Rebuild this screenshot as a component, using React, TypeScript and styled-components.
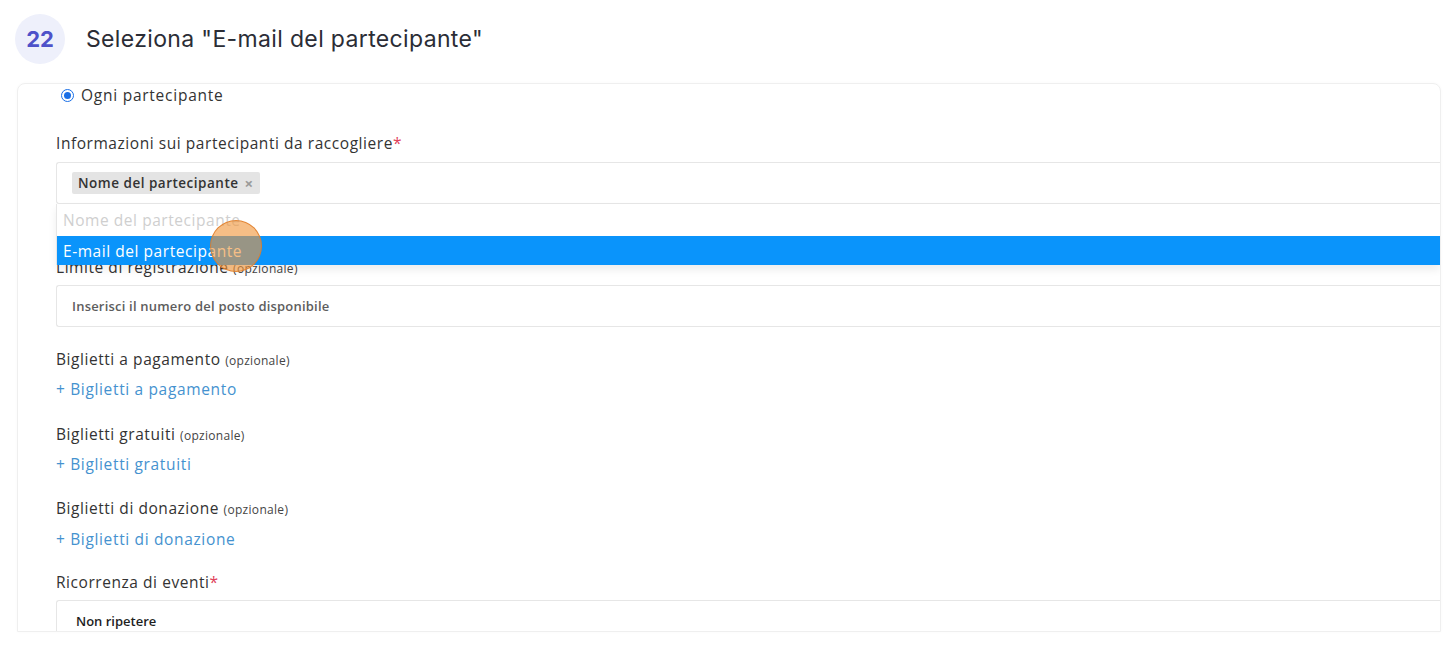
import React from "react";
import styled, { createGlobalStyle } from "styled-components";

const Global = createGlobalStyle`
  html, body { margin: 0; padding: 0; background: #ffffff; }
  body { width: 1454px; height: 646px; overflow: hidden; }
  * { box-sizing: border-box; }
`;

const Page = styled.div`
  width: 1454px;
  height: 646px;
  overflow: hidden;
  background: #fff;
`;

const Header = styled.header`
  display: flex;
  align-items: center;
  gap: 21px;
  padding: 14px 0 0 15px;
  height: 64px;
`;

const StepBadge = styled.div`
  width: 50px;
  height: 50px;
  border-radius: 50%;
  background: #eef0fb;
  color: #4e52c9;
  font-family: Inter, "Liberation Sans", sans-serif;
  font-weight: 700;
  font-size: 22px;
  display: flex;
  align-items: center;
  justify-content: center;
`;

const Title = styled.h1`
  margin: 0;
  font-family: Inter, "Liberation Sans", sans-serif;
  font-weight: 400;
  font-size: 23px;
  color: #2b2d36;
  letter-spacing: 0.35px;
`;

const Frame = styled.section`
  position: relative;
  margin: 19px 0 0 17px;
  width: 1424px;
  height: 549px;
  border: 1px solid #efefef;
  border-radius: 8px 8px 0 0;
  box-shadow: 0 0 3px rgba(0, 0, 0, 0.03);
  overflow: hidden;
  padding: 0 0 0 38px;
  font-family: "Open Sans", "Liberation Sans", sans-serif;
  color: #333;
  letter-spacing: 0.55px;
`;

const RadioRow = styled.label`
  display: flex;
  align-items: center;
  gap: 7px;
  height: 20px;
  margin: 1px 0 0 5px;
  font-size: 15.5px;
  letter-spacing: 0.75px;
  color: #333;
`;

const RadioDot = styled.span`
  width: 13px;
  height: 13px;
  border-radius: 50%;
  border: 1.5px solid #1a6fe6;
  display: flex;
  align-items: center;
  justify-content: center;
  &::after {
    content: "";
    width: 7px;
    height: 7px;
    border-radius: 50%;
    background: #1a6fe6;
  }
`;

const Group = styled.div<{ $mb?: number }>`
  position: relative;
  margin-bottom: ${(p) => p.$mb ?? 22}px;
`;

const Label = styled.div<{ $mt?: number; $gap?: number }>`
  height: 20px;
  line-height: 20px;
  font-size: 15.5px;
  color: #333;
  margin-top: ${(p) => p.$mt ?? 0}px;
  margin-bottom: ${(p) => p.$gap ?? 9}px;
  white-space: nowrap;
`;

const Optional = styled.span`
  font-size: 12px;
  color: #444;
  letter-spacing: 0.3px;
`;

const Req = styled.span`
  color: #e0405a;
`;

const Box = styled.div<{ $pl?: number }>`
  height: 42px;
  border: 1px solid #e6e6e6;
  border-right: none;
  border-radius: 3px 0 0 3px;
  display: flex;
  align-items: center;
  padding-left: ${(p) => p.$pl ?? 15}px;
  background: #fff;
`;

const Tag = styled.span`
  display: inline-flex;
  align-items: center;
  gap: 6px;
  height: 22px;
  padding: 0 6px;
  background: #e4e4e4;
  border-radius: 2px;
  font-size: 13.5px;
  font-weight: 600;
  color: #333;
  letter-spacing: 0.5px;
`;

const TagClose = styled.span`
  color: #9a9a9a;
  font-size: 15px;
  font-weight: 700;
`;

const BoxText = styled.span<{ $strong?: boolean }>`
  font-size: 13px;
  font-weight: 600;
  letter-spacing: ${(p) => (p.$strong ? 0 : 0.2)}px;
  color: ${(p) => (p.$strong ? "#1e1e1e" : "#5d5d5d")};
`;

const Dropdown = styled.ul`
  position: absolute;
  left: 0;
  right: 0;
  top: 71px;
  margin: 0;
  padding: 0;
  list-style: none;
  background: #fff;
  border-left: 1px solid #e6e6e6;
  box-shadow: 0 5px 8px rgba(0, 0, 0, 0.07);
  z-index: 2;
`;

const Option = styled.li<{ $active?: boolean; $disabled?: boolean }>`
  height: ${(p) => (p.$active ? 29 : 32)}px;
  display: flex;
  align-items: center;
  padding-left: 6px;
  font-size: 15.5px;
  background: ${(p) => (p.$active ? "#0a94fb" : "#fff")};
  color: ${(p) => (p.$active ? "#fff" : p.$disabled ? "#cfcfcf" : "#333")};
`;

const AddLink = styled.a`
  display: block;
  height: 20px;
  line-height: 20px;
  font-size: 15.5px;
  letter-spacing: 0.65px;
  color: #4592cf;
  text-decoration: none;
  cursor: pointer;
`;

const Cursor = styled.div`
  position: absolute;
  left: 192px;
  top: 136px;
  width: 52px;
  height: 52px;
  border-radius: 50%;
  background: rgba(240, 150, 60, 0.62);
  border: 1.5px solid rgba(225, 125, 40, 0.85);
  pointer-events: none;
  z-index: 3;
`;

export default function App() {
  return (
    <Page>
      <Global />
      <Header>
        <StepBadge>22</StepBadge>
        <Title>Seleziona "E-mail del partecipante"</Title>
      </Header>
      <Frame>
        <RadioRow>
          <RadioDot />
          Ogni partecipante
        </RadioRow>
        <Group $mb={53}>
          <Label $mt={28}>
            Informazioni sui partecipanti da raccogliere<Req>*</Req>
          </Label>
          <Box>
            <Tag>
              Nome del partecipante <TagClose>×</TagClose>
            </Tag>
          </Box>
          <Dropdown>
            <Option $disabled>Nome del partecipante</Option>
            <Option $active>E-mail del partecipante</Option>
          </Dropdown>
        </Group>
        <Group>
          <Label $gap={8}>
            Limite di registrazione <Optional>(opzionale)</Optional>
          </Label>
          <Box>
            <BoxText>Inserisci il numero del posto disponibile</BoxText>
          </Box>
        </Group>
        <Group $mb={25}>
          <Label $gap={10}>
            Biglietti a pagamento <Optional>(opzionale)</Optional>
          </Label>
          <AddLink>+ Biglietti a pagamento</AddLink>
        </Group>
        <Group $mb={24}>
          <Label $gap={10}>
            Biglietti gratuiti <Optional>(opzionale)</Optional>
          </Label>
          <AddLink>+ Biglietti gratuiti</AddLink>
        </Group>
        <Group $mb={23}>
          <Label $gap={11}>
            Biglietti di donazione <Optional>(opzionale)</Optional>
          </Label>
          <AddLink>+ Biglietti di donazione</AddLink>
        </Group>
        <Group>
          <Label $gap={8}>
            Ricorrenza di eventi<Req>*</Req>
          </Label>
          <Box $pl={19}>
            <BoxText $strong>Non ripetere</BoxText>
          </Box>
        </Group>
        <Cursor />
      </Frame>
    </Page>
  );
}
